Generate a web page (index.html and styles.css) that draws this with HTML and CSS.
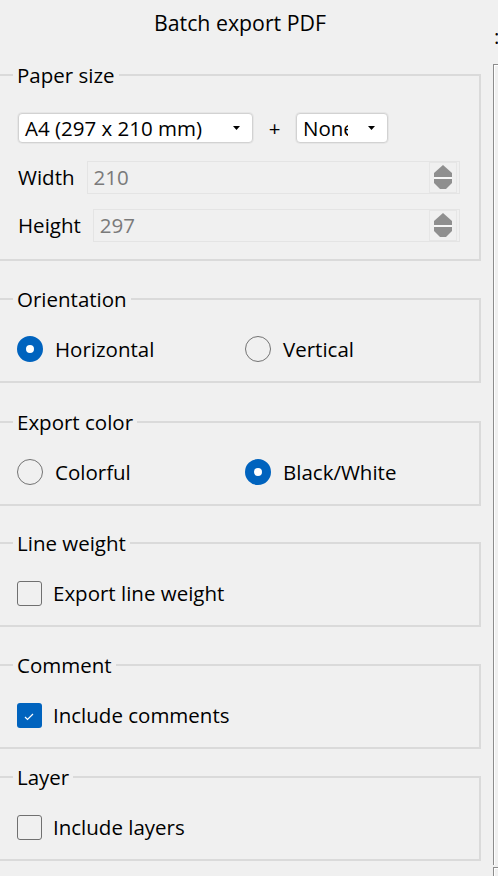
FILE: index.html
```html
<!DOCTYPE html>
<html lang="en">
<head>
<meta charset="utf-8">
<title>Batch export PDF</title>
<link rel="stylesheet" href="styles.css">
</head>
<body>
<div class="window">
  <div class="main">
    <div class="title">Batch export PDF</div>

    <fieldset class="group group-first">
      <legend>Paper size</legend>
      <div class="paper-body">
        <div class="combo-row">
          <div class="combo combo-size">
            <span class="combo-text">A4 (297 x 210 mm)</span>
            <svg class="combo-arrow" width="7" height="4" viewBox="0 0 7 4"><polygon points="0,0 7,0 3.5,4" fill="#000"/></svg>
          </div>
          <span class="plus">+</span>
          <div class="combo combo-extra">
            <span class="combo-text combo-text-clip">None</span>
            <svg class="combo-arrow" width="7" height="4" viewBox="0 0 7 4"><polygon points="0,0 7,0 3.5,4" fill="#000"/></svg>
          </div>
        </div>
        <div class="field-row">
          <span class="field-label">Width</span>
          <div class="spin">
            <span class="spin-value">210</span>
            <span class="spin-buttons">
              <svg width="26" height="30" viewBox="0 0 26 30">
                <polygon points="13,3 22,11 22,15 4,15 4,11" fill="#8f8f8f"/>
                <rect x="4" y="15" width="18" height="2" fill="#f7f7f7"/>
                <polygon points="4,17 22,17 22,21 16,27 10,27 4,21" fill="#8f8f8f"/>
              </svg>
            </span>
          </div>
        </div>
        <div class="field-row field-row-second">
          <span class="field-label">Height</span>
          <div class="spin">
            <span class="spin-value">297</span>
            <span class="spin-buttons">
              <svg width="26" height="30" viewBox="0 0 26 30">
                <polygon points="13,3 22,11 22,15 4,15 4,11" fill="#8f8f8f"/>
                <rect x="4" y="15" width="18" height="2" fill="#f7f7f7"/>
                <polygon points="4,17 22,17 22,21 16,27 10,27 4,21" fill="#8f8f8f"/>
              </svg>
            </span>
          </div>
        </div>
      </div>
    </fieldset>

    <fieldset class="group">
      <legend>Orientation</legend>
      <div class="option-body option-pair">
        <div class="option"><span class="radio radio-checked"></span><span class="option-label">Horizontal</span></div>
        <div class="option"><span class="radio"></span><span class="option-label">Vertical</span></div>
      </div>
    </fieldset>

    <fieldset class="group group-export">
      <legend>Export color</legend>
      <div class="option-body option-pair">
        <div class="option"><span class="radio"></span><span class="option-label">Colorful</span></div>
        <div class="option"><span class="radio radio-checked"></span><span class="option-label">Black/White</span></div>
      </div>
    </fieldset>

    <fieldset class="group group-line">
      <legend>Line weight</legend>
      <div class="option-body">
        <div class="option option-check"><span class="checkbox"></span><span class="option-label">Export line weight</span></div>
      </div>
    </fieldset>

    <fieldset class="group">
      <legend>Comment</legend>
      <div class="option-body">
        <div class="option option-check">
          <span class="checkbox checkbox-checked">
            <svg width="25" height="25" viewBox="0 0 25 25"><polyline points="8,14 10.5,16.5 16,11" fill="none" stroke="#fff" stroke-width="1.2"/></svg>
          </span>
          <span class="option-label">Include comments</span>
        </div>
      </div>
    </fieldset>

    <fieldset class="group group-layer">
      <legend>Layer</legend>
      <div class="option-body">
        <div class="option option-check"><span class="checkbox"></span><span class="option-label">Include layers</span></div>
      </div>
    </fieldset>
  </div>

  <div class="side">
    <span class="side-text">:</span>
    <div class="side-frame"></div>
    <div class="side-frame side-frame-next"></div>
  </div>
</div>
</body>
</html>
```

FILE: styles.css
```css
html, body {
  margin: 0;
  padding: 0;
  background: #f0f0f0;
}

body {
  font-family: "Open Sans", "Noto Sans", sans-serif;
  font-size: 20.5px;
  color: #000;
}

.window {
  display: flex;
  height: 876px;
  overflow: hidden;
}

.main {
  width: 493px;
  flex: none;
}

.title {
  width: 480px;
  height: 52px;
  padding-top: 11px;
  line-height: 24px;
  font-size: 21.3px;
  text-align: center;
}

/* group boxes */
.group {
  margin: 26px 0 0 0;
  padding: 0;
  border: 2px solid #dadada;
  border-left: none;
  width: 481px;
  box-sizing: border-box;
  min-width: 0;
}

.group-first {
  margin-top: 0;
}

.group-export {
  margin-top: 27px;
}

.group-line {
  margin-top: 25px;
}

.group-layer {
  margin-top: 16px;
}

.group legend {
  margin-left: 13px;
  padding: 0 4px;
  height: 24px;
  line-height: 24px;
}

/* paper size */
.paper-body {
  padding: 26px 19px 18px 18px;
}

.combo-row {
  display: flex;
  align-items: center;
  height: 30px;
}

.combo {
  height: 30px;
  box-sizing: border-box;
  background: #fff;
  border: 1px solid #d2d2d2;
  border-radius: 4px;
  box-shadow: 0 0 0 1px #e6e6e6;
  display: flex;
  align-items: center;
  padding: 0 12px 0 6px;
  line-height: 28px;
}

.combo-size {
  width: 235px;
}

.combo-extra {
  width: 92px;
}

.combo-text {
  white-space: nowrap;
}

.combo-text-clip {
  width: 45px;
  overflow: hidden;
}

.combo-arrow {
  margin-left: auto;
  flex: none;
}

.plus {
  width: 43px;
  text-align: center;
  line-height: 30px;
}

.field-row {
  display: flex;
  align-items: center;
  gap: 12px;
  height: 32px;
  margin-top: 18px;
}

.field-row-second {
  margin-top: 16px;
}

.field-label {
  line-height: 32px;
}

.spin {
  flex: 1;
  height: 33px;
  box-sizing: border-box;
  border: 1px solid #e4e4e4;
  background: #f0f0f0;
  display: flex;
  align-items: center;
  padding-left: 6px;
}

.spin-value {
  flex: 1;
  color: #7a7a7a;
}

.spin-buttons {
  width: 28px;
  height: 31px;
  margin-right: 2px;
  box-sizing: border-box;
  border: 1px solid #e6e6e6;
  display: flex;
  align-items: center;
  justify-content: center;
}

/* options */
.option-body {
  padding: 25px 17px 19px 17px;
}

.option-pair {
  display: grid;
  grid-template-columns: 228px 1fr;
}

.option {
  display: flex;
  align-items: center;
  gap: 12px;
  height: 26px;
}

.option-check {
  gap: 11px;
}

.option-label {
  line-height: 26px;
  white-space: nowrap;
}

.radio {
  width: 26px;
  height: 26px;
  box-sizing: border-box;
  border-radius: 50%;
  border: 1.5px solid #737373;
  flex: none;
}

.radio-checked {
  border: 9px solid #0063be;
  background: #fff;
}

.checkbox {
  width: 25px;
  height: 25px;
  box-sizing: border-box;
  border: 1.5px solid #707070;
  border-radius: 3px;
  flex: none;
  display: flex;
}

.checkbox-checked {
  border: none;
  background: #0063be;
}

/* right edge panel */
.side {
  flex: 1;
  display: flex;
  flex-direction: column;
  min-width: 0;
}

.side-text {
  display: block;
  height: 40px;
  padding: 24px 0 0 1px;
  line-height: 24px;
  overflow: hidden;
}

.side-frame {
  height: 800px;
  flex: none;
  border-top: 1px solid #8c8c8c;
  border-left: 1px solid #8c8c8c;
  box-shadow: inset 1px 1px 0 #ffffff;
}

.side-frame-next {
  margin-top: 2px;
  flex: 1;
  height: auto;
}
```
